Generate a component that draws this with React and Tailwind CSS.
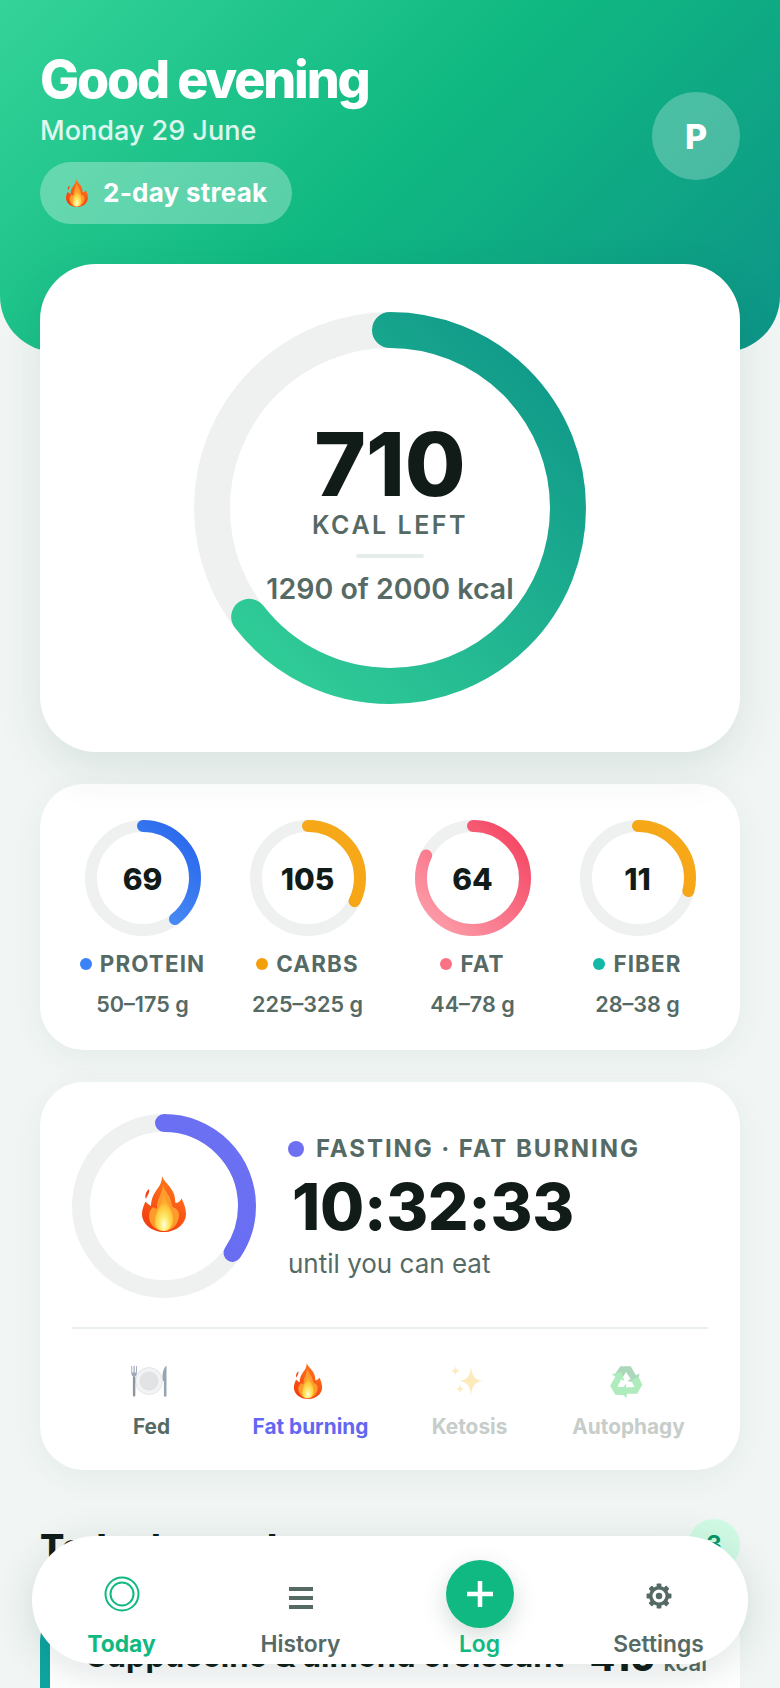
import React from "react";

const INTER = "font-['Inter',sans-serif]";

const macros = [
  { name: "PROTEIN", value: 69, pct: 0.394, range: "50–175 g", dot: "bg-[#3b82f6]", id: "protein", from: "#60a5fa", to: "#2563eb" },
  { name: "CARBS", value: 105, pct: 0.323, range: "225–325 g", dot: "bg-[#f59e0b]", id: "carbs", from: "#f59e0b", to: "#f7aa1c" },
  { name: "FAT", value: 64, pct: 0.82, range: "44–78 g", dot: "bg-[#fb7185]", id: "fat", from: "#fda4af", to: "#f43f5e" },
  { name: "FIBER", value: 11, pct: 0.29, range: "28–38 g", dot: "bg-[#14b8a6]", id: "fiber", from: "#f59e0b", to: "#f7aa1c" },
];

function Ring({ size, stroke, pct, id, from, to, children }) {
  const r = (size - stroke) / 2;
  const c = 2 * Math.PI * r;
  return (
    <div className="relative shrink-0" style={{ width: size, height: size }}>
      <svg width={size} height={size} className="-rotate-90">
        <defs>
          <linearGradient id={id} x1="0" y1="0" x2="1" y2="1">
            <stop offset="0" stopColor={from} />
            <stop offset="1" stopColor={to} />
          </linearGradient>
        </defs>
        <circle cx={size / 2} cy={size / 2} r={r} fill="none" stroke="#eef1f0" strokeWidth={stroke} />
        <circle
          cx={size / 2}
          cy={size / 2}
          r={r}
          fill="none"
          stroke={`url(#${id})`}
          strokeWidth={stroke}
          strokeLinecap="round"
          strokeDasharray={`${c * pct} ${c}`}
        />
      </svg>
      <div className="absolute inset-0 flex flex-col items-center justify-center">{children}</div>
    </div>
  );
}

function Flame({ className, id }) {
  return (
    <svg viewBox="0 0 44 56" className={className}>
      <defs>
        <linearGradient id={`${id}-outer`} x1="0.7" y1="0" x2="0.3" y2="1">
          <stop offset="0" stopColor="#ff7a20" />
          <stop offset="1" stopColor="#f43a0e" />
        </linearGradient>
        <radialGradient id={`${id}-core`} cx="0.5" cy="0.82" r="0.6">
          <stop offset="0" stopColor="#fffef0" />
          <stop offset="0.3" stopColor="#fff07a" />
          <stop offset="0.75" stopColor="#ffcb3d" />
          <stop offset="1" stopColor="#ffac2e" />
        </radialGradient>
      </defs>
      <path
        d="M20 0C22 6 29 10 32 18C33 21 33 24 33.500 27C36 27 38.500 25 39.500 22.500C42 27 44 33 44 38C44 48 34 56 22 56C10 56 0 48 0 38C0 33 2 29 3.500 25.500C5 27 7 29 9 30C9 22 13 16 16 12C18.500 9 20 5 20 0Z"
        fill={`url(#${id}-outer)`}
      />
      <path d="M7 13C8 17 5 20 4 23C2.500 20 4 15 7 13Z" fill="#f0451a" />
      <path
        d="M21 8C22 14 27 18 29 25C30 30 31 32 33 32C36 34 37 36 37 39C37 48 30 55 22 55C13 55 7 48 7 40C7 36 9 33 11 31C14 33 15 33 15 31C15 23 20 18 21 8Z"
        fill="#ff9a2c"
      />
      <path
        d="M22 18C23 26 30 32 31 41C32 49 27 55 22 55C15 55 12 50 13 43C14 35 21 28 22 18Z"
        fill={`url(#${id}-core)`}
      />
    </svg>
  );
}

function Plate({ className }) {
  return (
    <svg viewBox="0 0 36 32" className={className}>
      <circle cx="18" cy="16" r="13.500" fill="#f1f3f5" stroke="#d3d8de" strokeWidth="0.600" />
      <circle cx="18" cy="16" r="9" fill="#e1e3e5" stroke="#d6d9dc" strokeWidth="0.600" />
      <rect x="1.900" y="11" width="2.400" height="20.500" rx="1" fill="#8f959e" />
      <path d="M0.300 1v7c0 2.500 1.300 3.500 2.800 3.500S5.900 10.500 5.900 8V1h-.9v6.500H3.700V1H2.500v6.500H1.200V1z" fill="#9fa9bb" />
      <path d="M35.500 .5c-2.500 2-4 6-4 11 0 3 .4 4 1.400 5V30.500a1.300 1.300 0 0 0 2.600 0z" fill="#98a3b3" />
    </svg>
  );
}

function Sparkles({ className }) {
  return (
    <svg viewBox="0 0 32 32" className={className} fill="#fcc63f">
      <path d="M20 1c.7 9 3 14 12 15-9 1-11.300 6-12 15-.7-9-3-14-12-15 9-1 11.300-6 12-15z" />
      <path d="M4.500 1c.3 3 1.500 4.500 4.500 5-3 .4-4.200 2-4.500 5C4.200 8 3 6.400 0 6c3-.5 4.200-2 4.500-5z" />
      <path d="M9 19.500c.3 2.700 1.300 4 4 4.500-2.700.4-3.700 1.800-4 4.500-.3-2.700-1.300-4.100-4-4.500 2.700-.5 3.700-1.800 4-4.500z" />
    </svg>
  );
}

function Recycle({ className }) {
  const arrow = "M12 2.500L23 2.500L28.500 12L32.500 10L29.500 20L19.500 18L23 16L18 8.500L14 15L6.500 10.500Z";
  return (
    <svg viewBox="0 0 36 36" className={className}>
      <path d={arrow} fill="#2f9e55" />
      <path d={arrow} fill="#38cf5c" transform="rotate(120 18 19)" />
      <path d={arrow} fill="#38cf5c" transform="rotate(240 18 19)" />
    </svg>
  );
}

function Gear({ className }) {
  return (
    <svg viewBox="0 0 24 24" className={className} fill="#566a65">
      {[0, 45, 90, 135, 180, 225, 270, 315].map((a) => (
        <rect key={a} x="9.800" y="0.500" width="4.400" height="5" rx="0.800" transform={`rotate(${a} 12 12)`} />
      ))}
      <circle cx="12" cy="12" r="7.600" fill="#fff" stroke="#566a65" strokeWidth="3.200" />
      <circle cx="12" cy="12" r="3" />
    </svg>
  );
}

function Stage({ label, textClass, children }) {
  return (
    <div className="flex flex-col items-center">
      <div className="h-[36px] flex items-center justify-center -translate-x-[3px]">{children}</div>
      <span className={`mt-[14px] text-[20.800px] leading-[28px] font-bold ${textClass}`}>{label}</span>
    </div>
  );
}

function TabLabel({ children, className }) {
  return <span className={`text-[22.800px] leading-[28px] ${className}`}>{children}</span>;
}

export default function App() {
  return (
    <div className={`relative w-[780px] h-[1688px] overflow-hidden bg-[#f1f6f4] text-[#111c18] ${INTER}`}>
      <header className="h-[352px] rounded-b-[56px] bg-[linear-gradient(135deg,#34d399_0%,#10b981_48%,#0d9488_100%)] px-[40px] pt-[50px] flex justify-between items-start text-white">
        <div>
          <h1 className="text-[52px] leading-[60px] font-extrabold tracking-[-0.042em]">Good evening</h1>
          <p className="text-[27px] leading-[36px] font-medium text-white/85 mt-[3px]">Monday 29 June</p>
          <div className="mt-[13px] h-[62px] w-[252px] rounded-full bg-white/30 flex items-center pl-[25px] gap-[14px]">
            <Flame className="w-[24px] h-[28px]" id="flame-streak" />
            <span className="text-[26px] font-bold leading-none tracking-[0.01em]">2-day streak</span>
          </div>
        </div>
        <div className="mt-[42px] w-[88px] h-[88px] rounded-full bg-white/25 flex items-center justify-center text-[34px] font-extrabold">
          P
        </div>
      </header>

      <main className="-mt-[88px] px-[40px] flex flex-col gap-[32px]">
        <section className="relative rounded-[56px] bg-white py-[48px] flex justify-center shadow-[0_16px_48px_rgba(13,60,50,0.10)]">
          <Ring size={392} stroke={36} pct={0.645} id="kcal" from="#34d399" to="#0d9488">
            <div className="text-[88px] leading-[88px] font-extrabold mt-[10px]">710</div>
            <div className="text-[25px] leading-[32px] font-semibold tracking-[0.1em] text-[#566a65] mt-[1px]">KCAL LEFT</div>
            <div className="w-[68px] h-[4px] rounded-full bg-[#e6ecea] mt-[13px]" />
            <div className="text-[28.500px] leading-[36px] font-semibold text-[#566a65] mt-[13px]">1290 of 2000 kcal</div>
          </Ring>
        </section>

        <section className="rounded-[44px] bg-white px-[20px] pt-[36px] pb-[32px] grid grid-cols-4 shadow-[0_8px_32px_rgba(13,60,50,0.06)]">
          {macros.map((m) => (
            <div key={m.name} className="flex flex-col items-center">
              <Ring size={116} stroke={12} pct={m.pct} id={m.id} from={m.from} to={m.to}>
                <span className="text-[30px] font-extrabold leading-none mt-[1px]">{m.value}</span>
              </Ring>
              <div className="mt-[12px] flex items-center gap-[8px]">
                <span className={`w-[12px] h-[12px] rounded-full ${m.dot}`} />
                <span className="text-[22.400px] leading-[32px] font-bold tracking-[0.05em] text-[#566a65]">{m.name}</span>
              </div>
              <div className="mt-[10px] text-[21.600px] leading-[28px] font-semibold text-[#566a65]">{m.range}</div>
            </div>
          ))}
        </section>

        <section className="rounded-[44px] bg-white p-[32px] pb-[29px] shadow-[0_8px_32px_rgba(13,60,50,0.06)]">
          <div className="flex items-center gap-[32px]">
            <Ring size={184} stroke={18} pct={0.345} id="fast" from="#6366f1" to="#6d72f3">
              <Flame className="w-[46px] h-[56px] -mt-[4px]" id="flame-fast" />
            </Ring>
            <div className="pt-[3px]">
              <div className="flex items-center gap-[12px]">
                <span className="w-[16px] h-[16px] rounded-full bg-[#6d70f1]" />
                <span className="text-[24px] leading-[32px] font-bold tracking-[0.08em] text-[#566a65]">FASTING · FAT BURNING</span>
              </div>
              <div className="text-[64px] leading-[72px] font-extrabold tracking-[-0.005em] ml-[4px] mt-[6px]">10:32:33</div>
              <div className="text-[26px] leading-[36px] text-[#566a65] mt-[3px]">until you can eat</div>
            </div>
          </div>
          <div className="mt-[29px] pt-[34px] border-t-2 border-[#e8eeec] grid grid-cols-4">
            <Stage label="Fed" textClass="text-[#566a65]">
              <Plate className="w-[36px] h-[32px]" />
            </Stage>
            <Stage label="Fat burning" textClass="text-[#6366f1]">
              <Flame className="w-[30px] h-[36px]" id="flame-stage" />
            </Stage>
            <Stage label="Ketosis" textClass="text-[#c6cdca]">
              <Sparkles className="w-[32px] h-[32px] opacity-35" />
            </Stage>
            <Stage label="Autophagy" textClass="text-[#c6cdca]">
              <Recycle className="w-[34px] h-[34px] opacity-40" />
            </Stage>
          </div>
        </section>

        <section className="mt-[17px]">
          <div className="flex items-center justify-between h-[52px]">
            <h2 className="text-[36px] font-extrabold leading-none pt-[4px]">Today's meals</h2>
            <span className="w-[52px] h-[52px] rounded-full bg-[#d1fae5] text-[#059669] flex items-center justify-center text-[24px] font-bold">3</span>
          </div>
          <div className="mt-[38px] h-[120px] rounded-t-[32px] bg-white border-l-[10px] border-[#0ea5a0] pl-[35px] pr-[33px] pt-[29px] flex justify-between items-start">
            <span className="text-[31px] font-bold leading-[36px]">Cappuccino & almond croissant</span>
            <span className="flex items-baseline gap-[8px] mt-[2px]">
              <span className="text-[37px] font-extrabold leading-[36px]">410</span>
              <span className="text-[22px] font-semibold text-[#566a65]">kcal</span>
            </span>
          </div>
        </section>
      </main>

      <nav className="absolute left-[32px] right-[32px] top-[1536px] h-[128px] rounded-[64px] bg-white shadow-[0_8px_40px_rgba(13,60,50,0.14)] grid grid-cols-4">
        <div className="flex flex-col items-center pt-[40px]">
          <svg viewBox="0 0 36 36" className="w-[36px] h-[36px]" fill="none" stroke="#10b981" strokeWidth="2">
            <circle cx="18" cy="18" r="16.500" />
            <circle cx="18" cy="18" r="11.500" />
          </svg>
          <TabLabel className="mt-[18px] font-bold text-[#10b981]">Today</TabLabel>
        </div>
        <div className="flex flex-col items-center pt-[51px]">
          <div className="w-[24px] flex flex-col gap-[5px]">
            <div className="h-[4px] bg-[#566a65]" />
            <div className="h-[4px] bg-[#566a65]" />
            <div className="h-[4px] bg-[#566a65]" />
          </div>
          <TabLabel className="mt-[21px] font-semibold text-[#566a65]">History</TabLabel>
        </div>
        <div className="flex flex-col items-center pt-[24px]">
          <div className="w-[68px] h-[68px] rounded-full bg-[#10b981] shadow-[0_8px_24px_rgba(13,60,50,0.18)] flex items-center justify-center">
            <svg viewBox="0 0 28 28" className="w-[28px] h-[28px]" stroke="#fff" strokeWidth="4.500">
              <path d="M14 1v26M1 14h26" />
            </svg>
          </div>
          <TabLabel className="mt-[2px] font-semibold text-[#10b981]">Log</TabLabel>
        </div>
        <div className="flex flex-col items-center pt-[47px]">
          <Gear className="w-[26px] h-[26px]" />
          <TabLabel className="mt-[21px] font-semibold text-[#566a65]">Settings</TabLabel>
        </div>
      </nav>
    </div>
  );
}
